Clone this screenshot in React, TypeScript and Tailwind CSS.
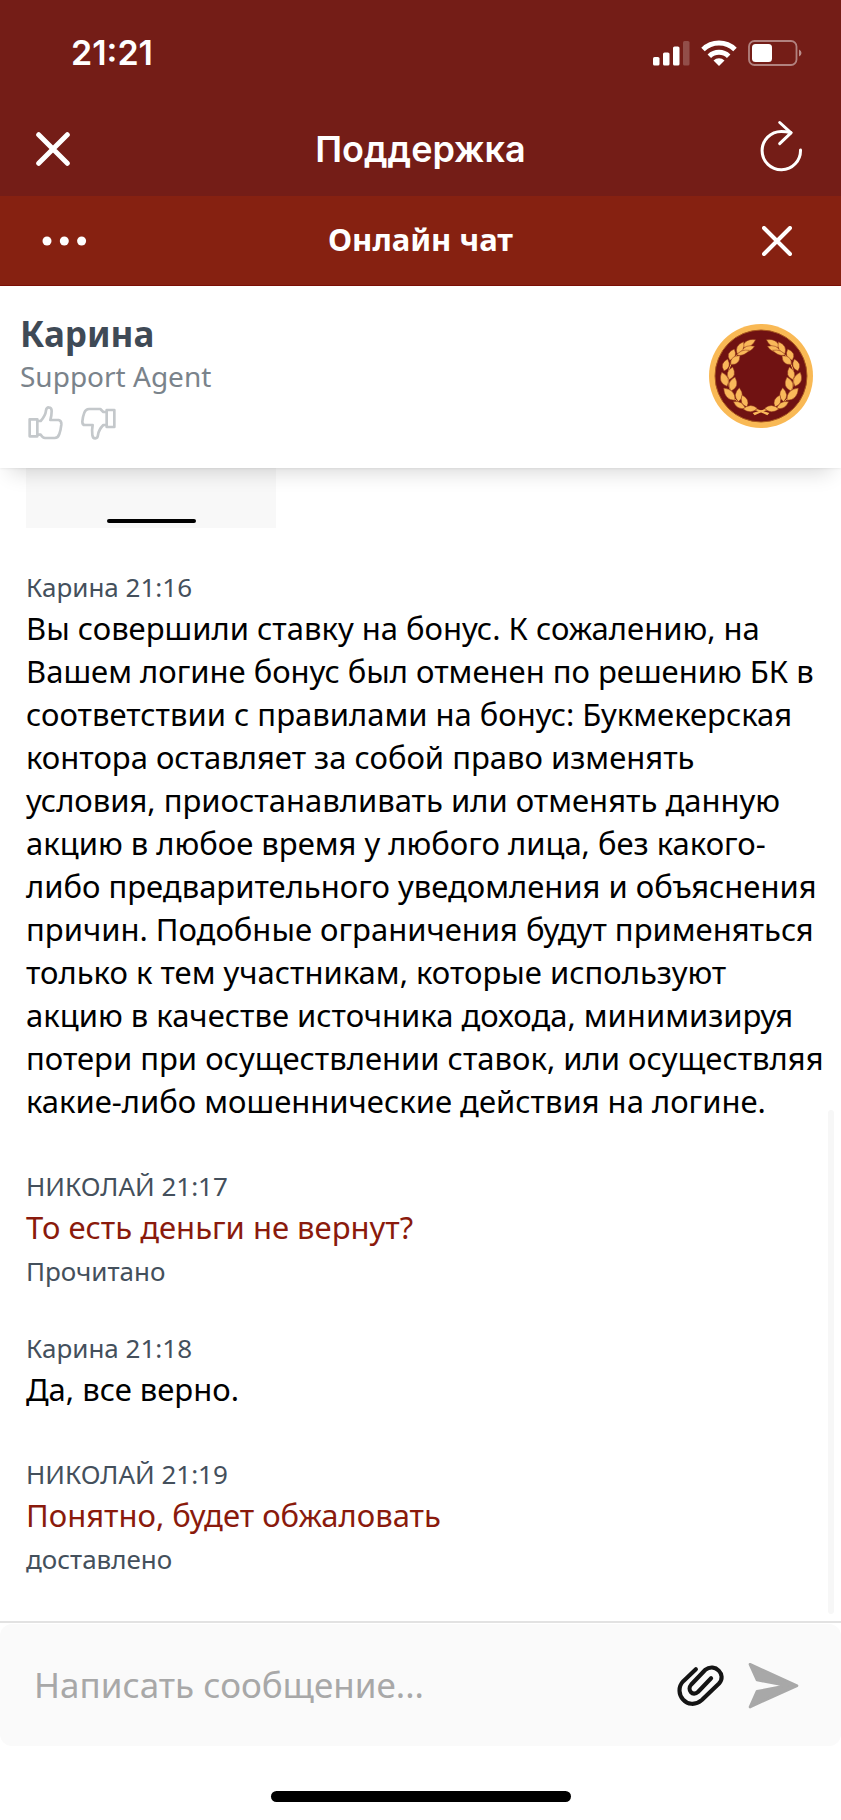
import { useState } from "react";
import clsx from "clsx";

type Message = {
  author: string;
  time: string;
  text: string;
  own?: boolean;
  status?: string;
};

const messages: Message[] = [
  {
    author: "Карина",
    time: "21:16",
    text: "Вы совершили ставку на бонус. К сожалению, на Вашем логине бонус был отменен по решению БК в соответствии с правилами на бонус: Букмекерская контора оставляет за собой право изменять условия, приостанавливать или отменять данную акцию в любое время у любого лица, без какого-либо предварительного уведомления и объяснения причин. Подобные ограничения будут применяться только к тем участникам, которые используют акцию в качестве источника дохода, минимизируя потери при осуществлении ставок, или осуществляя какие-либо мошеннические действия на логине.",
  },
  { author: "НИКОЛАЙ", time: "21:17", text: "То есть деньги не вернут?", own: true, status: "Прочитано" },
  { author: "Карина", time: "21:18", text: "Да, все верно." },
  { author: "НИКОЛАЙ", time: "21:19", text: "Понятно, будет обжаловать", own: true, status: "доставлено" },
];

// Left half of the wreath: base x/y, tip x/y, half width
const leaves = [
  [184, 140, 225, 118, 9],
  [182, 153, 222, 138, 8],
  [169, 160, 189, 124, 9],
  [168, 164, 206, 150, 6],
  [147, 180, 161, 146, 10],
  [150, 192, 178, 166, 10],
  [130, 212, 141, 176, 10],
  [146, 238, 156, 200, 10],
  [139, 258, 123, 216, 11],
  [151, 272, 163, 230, 11],
  [163, 300, 129, 263, 11],
  [173, 304, 176, 262, 10],
  [194, 324, 158, 304, 8],
  [199, 320, 184, 284, 9],
  [230, 324, 187, 326, 9],
];

function leafPath([x1, y1, x2, y2, w]: number[]) {
  const len = Math.hypot(x2 - x1, y2 - y1);
  const nx = (-(y2 - y1) / len) * w * 2.1;
  const ny = ((x2 - x1) / len) * w * 2.1;
  const mx = x1 + (x2 - x1) * 0.45;
  const my = y1 + (y2 - y1) * 0.45;
  return `M${x1} ${y1}Q${mx + nx} ${my + ny} ${x2} ${y2}Q${mx - nx} ${my - ny} ${x1} ${y1}Z`;
}

function WreathHalf() {
  return (
    <g>
      <path d="M186 146Q146 180 142 225Q142 300 200 326Q225 326 262 340" fill="none" stroke="#f0ab50" strokeWidth="3" />
      <path d="M228 326L266 338L260 345L226 329Z" fill="#f9b85a" />
      {leaves.map(leaf => (
        <path key={leaf.join()} d={leafPath(leaf)} fill="#f9b85a" stroke="#8a3018" strokeWidth="1.5" />
      ))}
    </g>
  );
}

function Avatar() {
  return (
    <svg viewBox="85 71 312 312" className="size-[104px] shrink-0" role="img" aria-label="Карина">
      <circle cx="241" cy="227" r="156" fill="#f9b955" />
      <circle cx="241" cy="227" r="138" fill="#701212" stroke="#a8561f" strokeWidth="3" />
      <WreathHalf />
      <g transform="translate(482 0) scale(-1 1)">
        <WreathHalf />
      </g>
    </svg>
  );
}

function StatusBar() {
  return (
    <div className="flex h-[106px] items-center justify-between pl-[71px] pr-[39px] text-white">
      <time className="text-[34px] font-semibold leading-10">21:21</time>
      <div className="flex items-center gap-[11px]">
        <svg width="37" height="26" viewBox="0 0 37 26" fill="currentColor">
          <rect x="0" y="17" width="6.5" height="8.5" rx="1.6" />
          <rect x="10" y="12.5" width="6.5" height="13" rx="1.6" />
          <rect x="20" y="6.5" width="6.5" height="19" rx="1.6" />
          <rect x="30" y="1" width="6.5" height="24.5" rx="1.6" opacity=".22" />
        </svg>
        <svg width="36" height="26" viewBox="0 0 36 26" fill="none" stroke="currentColor" strokeWidth="5">
          <path d="M2 9.5A23 23 0 0 1 34 9.5" />
          <path d="M8.3 16.2A14 14 0 0 1 27.7 16.2" />
          <path d="M12.5 20.5A8 8 0 0 1 23.5 20.5L18 26Z" fill="currentColor" stroke="none" />
        </svg>
        <svg width="54" height="26" viewBox="0 0 54 26">
          <rect x="1" y="1" width="47.5" height="24" rx="5.5" fill="none" stroke="#fff" strokeOpacity=".45" strokeWidth="1.8" />
          <rect x="4" y="4" width="20" height="18" rx="3.5" fill="#fff" />
          <path d="M51 9.5Q53.5 10.5 53.5 13T51 16.5Z" fill="#fff" fillOpacity=".5" />
        </svg>
      </div>
    </div>
  );
}

function NavBar() {
  return (
    <div className="grid h-[90px] grid-cols-[1fr_auto_1fr] items-center px-9 pb-1 text-white">
      <button type="button" aria-label="Закрыть" className="justify-self-start">
        <svg width="34" height="34" viewBox="0 0 34 34" stroke="currentColor" strokeWidth="5" strokeLinecap="round">
          <path d="M2.7 2.7L31.3 31.3M31.3 2.7L2.7 31.3" />
        </svg>
      </button>
      <h1 className="text-[36px] font-semibold leading-[44px]">Поддержка</h1>
      <button type="button" aria-label="Обновить" className="justify-self-end">
        <svg width="45" height="58" viewBox="0 0 45 58" fill="none" stroke="currentColor" strokeWidth="3" strokeLinecap="round" strokeLinejoin="round">
          <path d="M40.5 30A19.2 19.2 0 1 1 21.3 11.4Q26 11.4 31 12.7" />
          <path d="M19.7 2.5L31 12.8L19.7 23.7" />
        </svg>
      </button>
    </div>
  );
}

function ChatBar() {
  return (
    <div className="grid h-[90px] grid-cols-[1fr_auto_1fr] items-center border-b border-[#7c1006] bg-[#862111] px-[42px] font-['Noto_Sans',sans-serif] text-white">
      <button type="button" aria-label="Меню" className="justify-self-start">
        <svg width="45" height="10" viewBox="0 0 45 10" fill="currentColor">
          <circle cx="5" cy="5" r="4.5" />
          <circle cx="22.3" cy="5" r="4.5" />
          <circle cx="39.6" cy="5" r="4.5" />
        </svg>
      </button>
      <h2 className="pb-1 text-[31px] font-bold leading-10">Онлайн чат</h2>
      <button type="button" aria-label="Закрыть чат" className="justify-self-end pr-[7px]">
        <svg width="30" height="30" viewBox="0 0 30 30" stroke="currentColor" strokeWidth="4" strokeLinecap="round">
          <path d="M2 2L28 28M28 2L2 28" />
        </svg>
      </button>
    </div>
  );
}

function AgentHeader() {
  return (
    <section className="relative z-10 flex items-center justify-between bg-white pb-7 pl-5 pr-7 pt-[26px] shadow-[0_14px_20px_-10px_rgba(0,0,0,0.16),0_1px_2px_rgba(0,0,0,0.06)]">
      <div>
        <p className="text-[35px] font-bold leading-[44px] text-[#3f4a56]">Карина</p>
        <p className="text-[28px] leading-10 text-[#7a838b]">Support Agent</p>
        <div className="ml-2 mt-2.5 flex gap-4 text-[#c4c8cb]">
          <button type="button" aria-label="Нравится">
            <svg width="36" height="34" viewBox="86 16 108 102" fill="none" stroke="currentColor" strokeWidth="8" strokeLinejoin="round">
              <path d="M91 56H114V107H91Z" />
              <path d="M115 61H124Q138 46 140 30C140 17 157 17 157 31Q157 44 153 58H178Q187 60 186 72Q184 90 180 100Q176 112 166 112H137Q130 112 124 102H115" />
            </svg>
          </button>
          <button type="button" aria-label="Не нравится">
            <svg width="36" height="34" viewBox="241 19 108 102" fill="none" stroke="currentColor" strokeWidth="8" strokeLinejoin="round">
              <path d="M321 31H344V82H321Z" />
              <path d="M320 37H311L302 28H268Q258 28 254 39Q249 52 248 66Q248 76 256 76H279Q276 92 278 106C280 120 294 119 295 106Q297 90 311 76H320" />
            </svg>
          </button>
        </div>
      </div>
      <Avatar />
    </section>
  );
}

function MessageItem({ message }: { message: Message }) {
  return (
    <li>
      <p className="text-[26px] leading-10 text-[#44505c]">
        {message.author} <time>{message.time}</time>
      </p>
      <p className={clsx("text-[31px] leading-[43px]", message.own ? "text-[#8a1a0c]" : "text-black")}>{message.text}</p>
      {message.status && <p className="mt-2 text-[26px] leading-7 text-[#44505c]">{message.status}</p>}
    </li>
  );
}

function Composer() {
  const [draft, setDraft] = useState("");

  return (
    <footer className="border-t-2 border-[#e2e2e2] pt-px">
      <form
        className="flex h-[122px] items-center rounded-xl bg-[#fafafa] pl-[34px] pr-[42px]"
        onSubmit={event => {
          event.preventDefault();
          setDraft("");
        }}
      >
        <input
          type="text"
          aria-label="Сообщение"
          placeholder="Написать сообщение..."
          value={draft}
          onChange={event => setDraft(event.target.value)}
          className="h-12 min-w-0 flex-1 bg-transparent text-[35px] text-black outline-none placeholder:text-[#a8a8a8]"
        />
        <button type="button" aria-label="Прикрепить файл" className="mr-6 text-[#141414]">
          <svg width="47" height="43" viewBox="105 225 142 130" fill="none" stroke="currentColor" strokeWidth="12.5" strokeLinecap="round" strokeLinejoin="round">
            <path d="M162 241L124 277C90 313 138 370 180 334L232 284C256 258 220 220 190 243L148 287C134 303 152 325 169 309L208 268" />
          </svg>
        </button>
        <button type="submit" aria-label="Отправить" className="text-[#a8a8a8]">
          <svg width="51" height="47" viewBox="319 217 153 141" fill="currentColor" stroke="currentColor" strokeWidth="8" strokeLinejoin="round">
            <path d="M325 224L466 288L325 352L346 305L436 288L346 271Z" />
          </svg>
        </button>
      </form>
      <div className="mx-auto mb-[18px] mt-[45px] h-[11px] w-[300px] rounded-full bg-black" />
    </footer>
  );
}

export default function App() {
  return (
    <div className="flex min-h-screen flex-col bg-white font-['Noto_Sans',sans-serif]">
      <header className="bg-[#741d17] font-['Inter',sans-serif]">
        <StatusBar />
        <NavBar />
        <ChatBar />
      </header>
      <AgentHeader />
      <main className="relative flex-1 pb-8 pl-[26px] pr-4">
        <div className="flex h-[60px] w-[250px] items-end justify-center bg-[#f8f8f8] pb-[5px]">
          <div className="h-1 w-[89px] rounded-full bg-black" />
        </div>
        <ul className="mt-[39px] flex flex-col gap-[43px]">
          {messages.map(message => (
            <MessageItem key={message.time} message={message} />
          ))}
        </ul>
        <div className="absolute bottom-[7px] right-[7px] h-[504px] w-1.5 rounded-full bg-[#f7f7f7]" />
      </main>
      <Composer />
    </div>
  );
}
